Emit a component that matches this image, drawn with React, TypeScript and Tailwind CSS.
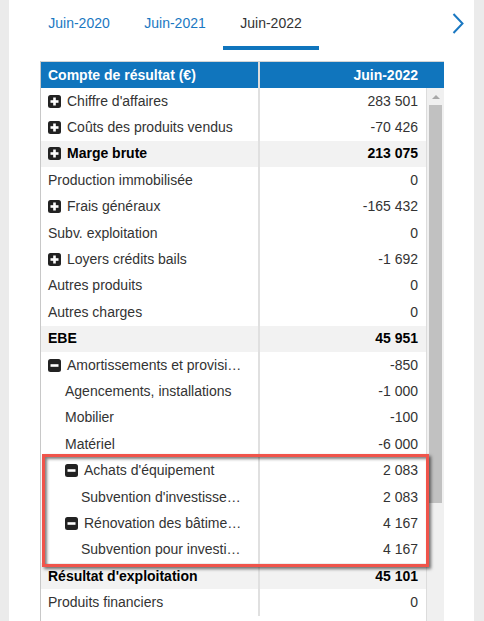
type Row = {
  label: string
  value: string
  icon?: 'plus' | 'minus'
  level?: number
  bold?: boolean
}

const rows: Row[] = [
  { label: "Chiffre d'affaires", value: '283 501', icon: 'plus' },
  { label: 'Coûts des produits vendus', value: '-70 426', icon: 'plus' },
  { label: 'Marge brute', value: '213 075', icon: 'plus', bold: true },
  { label: 'Production immobilisée', value: '0' },
  { label: 'Frais généraux', value: '-165 432', icon: 'plus' },
  { label: 'Subv. exploitation', value: '0' },
  { label: 'Loyers crédits bails', value: '-1 692', icon: 'plus' },
  { label: 'Autres produits', value: '0' },
  { label: 'Autres charges', value: '0' },
  { label: 'EBE', value: '45 951', bold: true },
  { label: 'Amortissements et provisi…', value: '-850', icon: 'minus' },
  { label: 'Agencements, installations', value: '-1 000', level: 1 },
  { label: 'Mobilier', value: '-100', level: 1 },
  { label: 'Matériel', value: '-6 000', level: 1 },
  { label: "Achats d'équipement", value: '2 083', icon: 'minus', level: 1 },
  { label: "Subvention d'investisse…", value: '2 083', level: 2 },
  { label: 'Rénovation des bâtime…', value: '4 167', icon: 'minus', level: 1 },
  { label: 'Subvention pour investi…', value: '4 167', level: 2 },
  { label: "Résultat d'exploitation", value: '45 101', bold: true },
  { label: 'Produits financiers', value: '0' },
]

const indent = ['pl-[7px]', 'pl-[24px]', 'pl-[40px]']

// petit carré noir + / −
const ToggleIcon = ({ kind }: { kind: 'plus' | 'minus' }) => (
  <svg width="13" height="13" viewBox="0 0 13 13" className="shrink-0 mr-[6px]">
    <rect x="0" y="0" width="13" height="13" rx="2.5" fill="#222" />
    <rect x="2.5" y="5.2" width="8" height="2.6" fill="#fff" />
    {kind === 'plus' && <rect x="5.2" y="2.5" width="2.6" height="8" fill="#fff" />}
  </svg>
)

const tabs = ['Juin-2020', 'Juin-2021', 'Juin-2022']

export default function App() {
  return (
    <div className="relative w-[484px] h-[621px] overflow-hidden bg-[#ebebeb] flex font-['Liberation_Sans',Arial,sans-serif] text-[14px]">
      <div className="ml-[9px] w-[465px] h-full bg-white flex flex-col">
        {/* --- Onglets --- */}
        <div className="flex h-[50px] pl-[22px] relative">
          {tabs.map((t, i) => {
            const active = i === tabs.length - 1
            return (
              <div key={t} className="w-[96px] h-full flex flex-col items-center">
                <div className={`h-[46px] pt-[13px] leading-[20px] ${active ? 'text-[#333]' : 'text-[#1a78c2]'}`}>{t}</div>
                {active && <div className="w-full h-[4px] bg-[#1075bd]" />}
              </div>
            )
          })}
          <svg width="12" height="22" viewBox="0 0 12 22" className="absolute left-[443px] top-[13px]">
            <polyline points="1.5,1 10.5,10.5 1.5,20" fill="none" stroke="#1a78c2" strokeWidth="2" />
          </svg>
        </div>

        {/* --- Tableau --- */}
        <div className="mt-[11px] ml-[31px] w-[404px] flex-1 flex flex-col border-l border-[#c8c8c8]">
          <div className="flex h-[27px] bg-[#1075bd] border-t border-[#d4d4d4] text-white font-bold">
            <div className="w-[217px] pl-[7px] flex items-center">Compte de résultat (€)</div>
            <div className="w-[2px] bg-[#dcdcdc]" />
            <div className="flex-1 flex items-center justify-end pr-[26px]">Juin-2022</div>
          </div>
          <div className="flex flex-1">
            <div className="w-[386px] flex flex-col">
              {rows.map((r, i) => (
                <div
                  key={i}
                  className={`flex h-[26.4px] shrink-0 ${r.bold ? 'bg-[#f2f2f2] font-bold text-black' : 'text-[#333]'}`}
                >
                  <div className={`w-[217px] flex items-center whitespace-nowrap overflow-hidden ${indent[r.level ?? 0]}`}>
                    {r.icon && <ToggleIcon kind={r.icon} />}
                    {r.label}
                  </div>
                  <div className="w-[2px] bg-[#e0e0e0]" />
                  <div className="flex-1 flex items-center justify-end pr-[8px]">{r.value}</div>
                </div>
              ))}
            </div>
            {/* barre de défilement */}
            <div className="w-[18px] bg-[#f0f0f0] border-l border-[#dcdcdc] flex flex-col items-center">
              <div className="h-[17px] flex items-center justify-center">
                <div className="w-0 h-0 border-l-[4px] border-r-[4px] border-b-[4px] border-l-transparent border-r-transparent border-b-[#a8a8a8]" />
              </div>
              <div className="w-[13px] h-[398px] bg-[#c1c1c1]" />
            </div>
          </div>
        </div>
      </div>

      {/* Encadré rouge d'annotation */}
      <div className="absolute left-[42px] top-[454px] w-[387px] h-[113px] border-[3px] border-[#f0544b] shadow-[2px_2px_3px_rgba(0,0,0,0.55),inset_2px_2px_3px_rgba(0,0,0,0.5)]" />
    </div>
  )
}
